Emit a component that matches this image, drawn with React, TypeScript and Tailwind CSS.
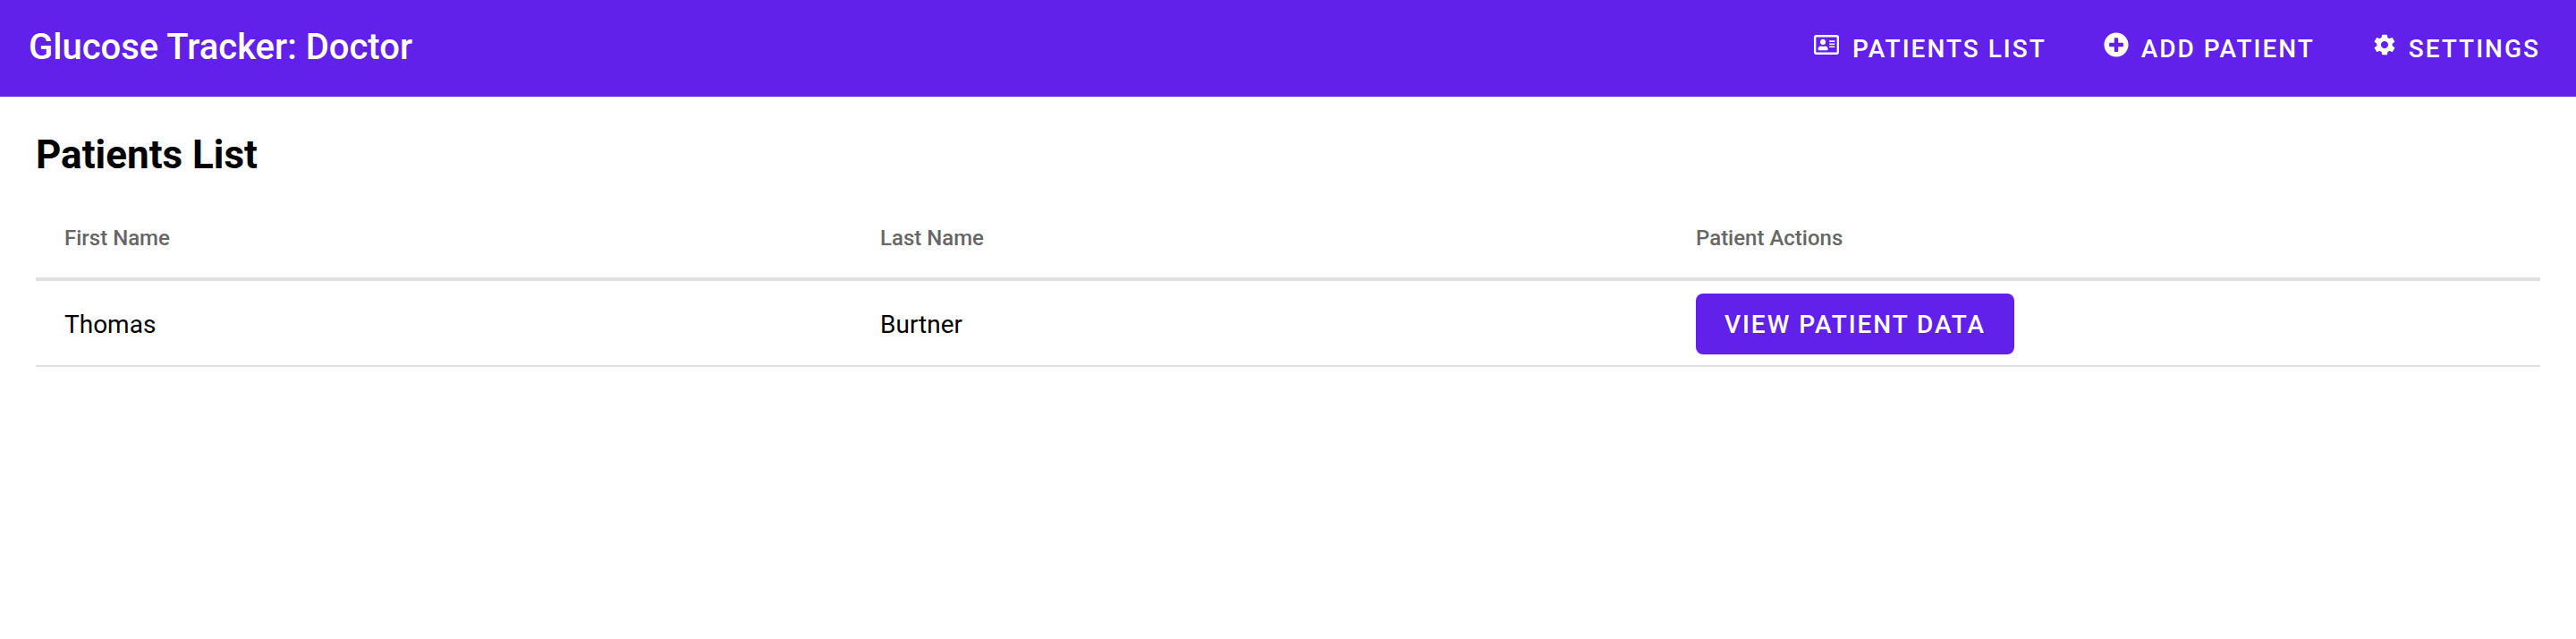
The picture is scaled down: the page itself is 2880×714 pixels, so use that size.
import React from "react";
import { FaPlusCircle, FaRegAddressCard } from "react-icons/fa";
import { IoMdSettings } from "react-icons/io";

const links = [
  { label: "Patients List", Icon: FaRegAddressCard, gap: "mr-[15px]" },
  { label: "Add Patient", Icon: FaPlusCircle, gap: "mr-[14px]" },
  { label: "Settings", Icon: IoMdSettings, gap: "mr-[13px]" },
];

const patients = [{ first: "Thomas", last: "Burtner" }];

export default function App() {
  return (
    <div className="min-h-[714px] bg-white font-['Roboto',sans-serif] text-black">
      <header className="flex h-[108px] items-center justify-between bg-[#6221ea] pr-10 pl-8 text-white">
        <span className="pb-0.5 text-[40px] leading-[48px] font-medium">Glucose Tracker: Doctor</span>
        <nav className="flex gap-16 pt-px">
          {links.map(({ label, Icon, gap }) => (
            <a key={label} className="text-[28px] leading-[36px] font-medium tracking-[2px] whitespace-nowrap uppercase">
              <Icon className={`${gap} inline align-baseline`} />
              {label}
            </a>
          ))}
        </nav>
      </header>
      <main className="px-10 pt-[39px]">
        <h1 className="text-[44px] leading-[52px] font-bold">Patients List</h1>
        <div className="mt-[15px]">
          <div className="grid h-[100px] grid-cols-[912px_912px_1fr] items-center border-b-4 border-[#e0e0e0] px-8 pt-2 text-[24px] font-medium text-[#666666]">
            <span>First Name</span>
            <span>Last Name</span>
            <span>Patient Actions</span>
          </div>
          {patients.map((p) => (
            <div key={p.first} className="grid h-24 grid-cols-[912px_912px_1fr] items-center border-b-2 border-[#e0e0e0] px-8 pt-0.5 text-[28px]">
              <span className="pt-0.5">{p.first}</span>
              <span className="pt-0.5">{p.last}</span>
              <button className="h-[68px] w-[356px] rounded-lg bg-[#6221ea] pt-0.5 font-medium tracking-[1.95px] whitespace-nowrap text-white uppercase">
                View Patient Data
              </button>
            </div>
          ))}
        </div>
      </main>
    </div>
  );
}
